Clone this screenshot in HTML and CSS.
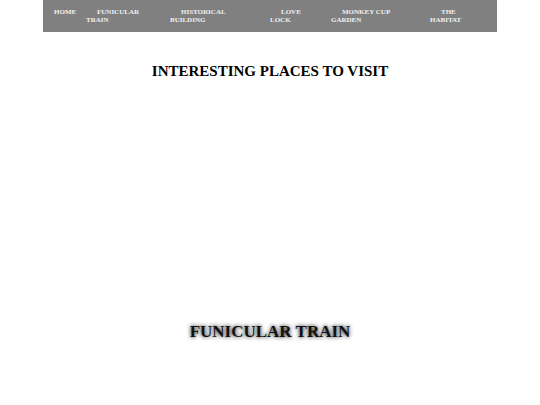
FILE: index.html
```html
<!DOCTYPE html>
<html>
<head>
<meta charset="utf-8">
<link rel="stylesheet" href="styles.css">
</head>
<body>
<nav class="nav">
  <ul class="menu">
    <li class="item i1"><a class="link" href="#">HOME</a></li>
    <li class="item i2"><a class="link" href="#">FUNICULAR TRAIN</a></li>
    <li class="item i3"><a class="link" href="#">HISTORICAL BUILDING</a></li>
    <li class="item i4"><a class="link" href="#">LOVE LOCK</a></li>
    <li class="item i5"><a class="link" href="#">MONKEY CUP GARDEN</a></li>
    <li class="item i6"><a class="link" href="#">THE HABITAT</a></li>
  </ul>
</nav>
<h1 class="title">INTERESTING PLACES TO VISIT</h1>
<h2 class="place">FUNICULAR TRAIN</h2>
</body>
</html>
```
FILE: styles.css
```css
html, body {
  margin: 0;
  padding: 0;
  background: #fff;
}
body {
  font-family: "Liberation Serif", "Times New Roman", serif;
}
.nav {
  width: 454px;
  margin: 0 auto;
  background: #808080;
  height: 32px;
  box-sizing: border-box;
  padding-top: 8px;
}
.menu {
  list-style: none;
  margin: 0;
  padding: 0;
  display: flex;
}
.item {
  flex: none;
  font-size: 7px;
  line-height: 8px;
  font-weight: bold;
}
.link {
  color: #f0f0f0;
  text-decoration: none;
  padding-left: 11px;
}
.i1 { width: 43px; }
.i2 { width: 56px; margin-right: 28px; }
.i3 { width: 60px; margin-right: 40px; }
.i4 { width: 36px; margin-right: 25px; }
.i5 { width: 62px; margin-right: 37px; }
.i6 { width: 32px; margin-right: 35px; }
.title {
  margin: 30px 0 0;
  text-align: center;
  font-size: 15px;
  line-height: 18px;
  font-weight: bold;
  color: #000;
}
.place {
  margin: 242px 0 0;
  text-align: center;
  font-size: 17px;
  line-height: 20px;
  font-weight: bold;
  color: #111;
  text-shadow: 0 0 4px #000;
}
```
